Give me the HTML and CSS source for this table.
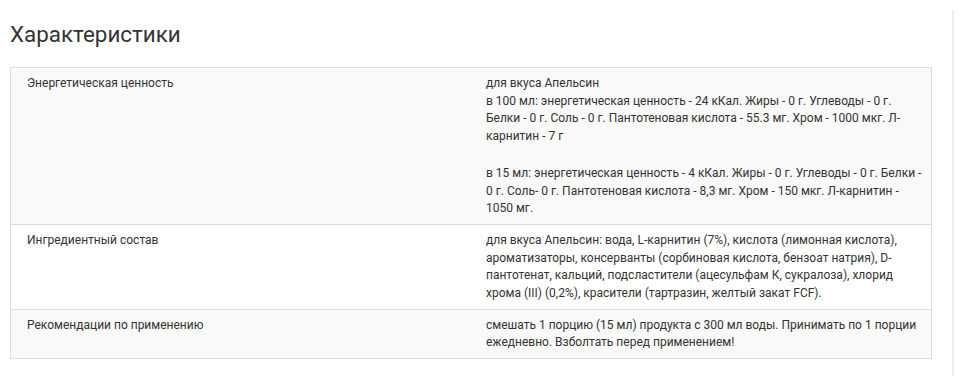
FILE: index.html
```html
<!DOCTYPE html>
<html lang="ru">
<head>
<meta charset="utf-8">
<link rel="stylesheet" href="styles.css">
</head>
<body>
<div class="page">
  <main class="content">
    <h2 class="title">Характеристики</h2>
    <table class="specs">
      <tbody>
        <tr class="odd">
          <td class="label">Энергетическая ценность</td>
          <td class="value">
            <div>для вкуса Апельсин<br>в 100 мл: энергетическая ценность - 24 кКал. Жиры - 0 г. Углеводы - 0 г. Белки - 0 г. Соль - 0 г. Пантотеновая кислота - 55.3 мг. Хром - 1000 мкг. Л-карнитин - 7 г</div>
            <div class="block">в 15 мл: энергетическая ценность - 4 кКал. Жиры - 0 г. Углеводы - 0 г. Белки - 0 г. Соль- 0 г. Пантотеновая кислота - 8,3 мг. Хром - 150 мкг. Л-карнитин - 1050 мг.</div>
          </td>
        </tr>
        <tr>
          <td class="label">Ингредиентный состав</td>
          <td class="value">для вкуса Апельсин: вода, L-карнитин (7%), кислота (лимонная кислота), ароматизаторы, консерванты (сорбиновая кислота, бензоат натрия), D-пантотенат, кальций, подсластители (ацесульфам К, сукралоза), хлорид хрома (III) (0,2%), красители (тартразин, желтый закат FCF).</td>
        </tr>
        <tr class="odd">
          <td class="label">Рекомендации по применению</td>
          <td class="value">смешать 1 порцию (15 мл) продукта с 300 мл воды. Принимать по 1 порции ежедневно. Взболтать перед применением!</td>
        </tr>
      </tbody>
    </table>
  </main>
  <aside class="rail"></aside>
</div>
</body>
</html>
```

FILE: styles.css
```css
* { box-sizing: border-box; }
html, body { margin: 0; padding: 0; background: #fff; }
body {
  font-family: Roboto, "Noto Sans", Arial, sans-serif;
  color: #333;
}
.page {
  display: flex;
  padding: 10px 0 0 10px;
}
.content {
  width: 922px;
  flex: none;
}
.rail {
  margin-left: 20px;
  width: 2px;
  height: 366px;
  background: #ececec;
}
.title {
  margin: 10px 0 19px;
  font-size: 22.4px;
  font-weight: 400;
  line-height: 28px;
  color: #333;
}
.specs {
  width: 922px;
  border-collapse: collapse;
  border: 1px solid #ddd;
  table-layout: fixed;
  font-size: 12px;
  line-height: 17.7px;
}
.specs td {
  vertical-align: top;
  padding: 7px 4px 6px 15px;
  border-top: 1px solid #ddd;
}
.specs .label { padding-left: 16px; }
.specs tr.odd td { background: #f9f9f9; }
.block { margin-top: 19px; }
```
